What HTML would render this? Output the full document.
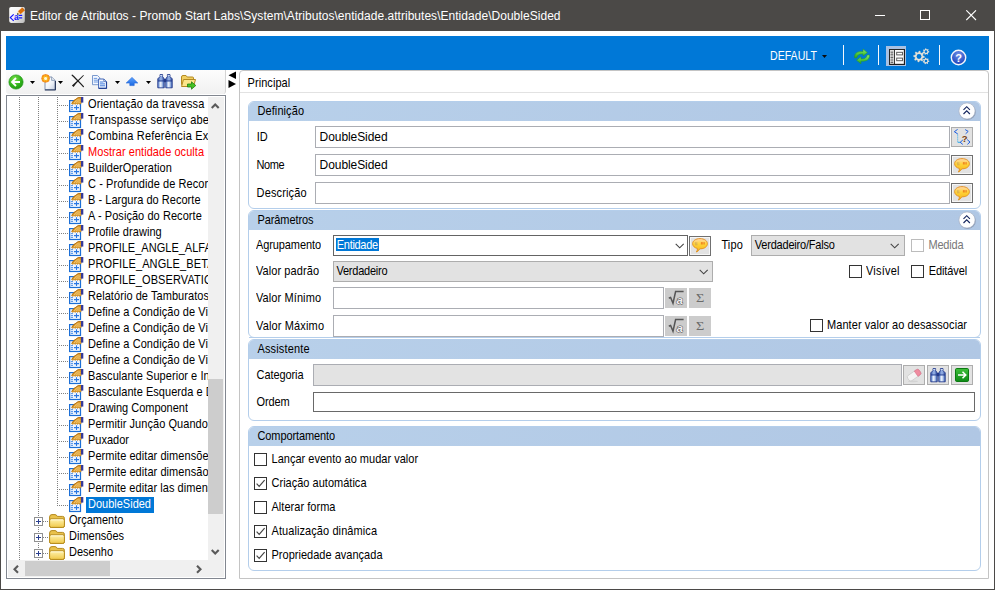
<!DOCTYPE html><html><head><meta charset="utf-8"><title>Editor de Atributos</title><style>
html,body{margin:0;padding:0;}
body{width:995px;height:590px;overflow:hidden;background:#fff;font-family:"Liberation Sans",sans-serif;font-size:11px;color:#000;position:relative;}
div,svg{box-sizing:border-box;}
.abs{position:absolute;}
.grp{position:absolute;border:1px solid #b4ceeb;border-radius:6px;background:#fff;overflow:hidden;}
.gh{position:absolute;left:-1px;top:-1px;right:-1px;height:20px;background:linear-gradient(90deg,#b8d0ea 0%,#b0c7e4 100%);}
.inp{position:absolute;background:#fff;border:1px solid #abadb3;}
.btn{position:absolute;background:#e2e2e2;border:1px solid #adadad;}
.cb{position:absolute;width:13px;height:13px;background:#fff;border:1px solid #333;}
.vdot{position:absolute;width:1px;background-image:linear-gradient(#808080 50%,rgba(0,0,0,0) 50%);background-size:1px 2px;}
.hdot{position:absolute;height:1px;background-image:linear-gradient(90deg,#808080 50%,rgba(0,0,0,0) 50%);background-size:2px 1px;}
</style></head><body>
<div style="position:absolute;left:0px;top:0px;width:995px;height:590px;background:#4b4947;"></div>
<div style="position:absolute;left:1px;top:31px;width:993px;height:558px;background:#fff;"></div>
<svg style="position:absolute;left:9px;top:7px" width="16" height="16" viewBox="0 0 16 16"><defs><linearGradient id="gti" x1="0" y1="0" x2="1" y2="1"><stop offset="0" stop-color="#ffffff"/><stop offset="0.45" stop-color="#f4f4f4"/><stop offset="1" stop-color="#b9b9b9"/></linearGradient></defs>
<rect x="0.2" y="0" width="15.6" height="15.9" rx="1.8" fill="url(#gti)"/>
<path d="M4.7 7.3 L1.3 10.6 L4.7 13.9" fill="none" stroke="#1414ff" stroke-width="1.15"/>
<text x="4.9" y="13.1" font-family="Liberation Sans, sans-serif" font-weight="bold" font-size="8.2" fill="#1414ff">a</text>
<path d="M9.6 8.4h3.6M9.6 10.8h3.6" stroke="#1414ff" stroke-width="1.15"/>
<path d="M8.90 4.22 L13.13 0.54 L15.75 3.56 L11.52 7.24 Z" fill="#e8780c"/>
<path d="M9.8 5.2 L14 1.55 M10.7 6.3 L14.9 2.6" stroke="#b65a06" stroke-width="0.5"/>
<path d="M13.13 0.54 L15.75 3.56" stroke="#a85206" stroke-width="0.7"/>
<path d="M8.2 7.5 L8.90 4.22 L11.52 7.24 Z" fill="#f7d58e"/>
<path d="M8.0 7.7 L8.5 5.9 L9.9 7.3 Z" fill="#111"/></svg>
<div style="position:absolute;left:30px;top:7.93px;font-size:12px;line-height:16px;color:#fff;white-space:nowrap;letter-spacing:0.030px;">Editor de Atributos - Promob Start Labs\System\Atributos\entidade.attributes\Entidade\DoubleSided</div>
<svg style="position:absolute;left:875px;top:10px" width="11" height="11" viewBox="0 0 11 11"><path d="M0 5.5h10" stroke="#fff" stroke-width="1"/></svg>
<svg style="position:absolute;left:920px;top:10px" width="11" height="11" viewBox="0 0 11 11"><rect x="0.5" y="0.5" width="9" height="9" fill="none" stroke="#fff" stroke-width="1"/></svg>
<svg style="position:absolute;left:966px;top:10px" width="11" height="11" viewBox="0 0 11 11"><path d="M0.3 0.3 L10 10 M10 0.3 L0.3 10" stroke="#fff" stroke-width="1.1"/></svg>
<div style="position:absolute;left:6px;top:36px;width:983px;height:34px;background:#0078d7;"></div>
<div style="position:absolute;left:769.7px;top:47.93px;font-size:12px;line-height:16px;color:#fff;white-space:nowrap;transform-origin:0 0;transform:scaleX(0.8829);">DEFAULT</div>
<svg style="position:absolute;left:822px;top:55px" width="5" height="3" viewBox="0 0 5 3"><path d="M0 0h5L2.5 3z" fill="#0b0b0b"/></svg>
<div style="position:absolute;left:843px;top:45px;width:1px;height:20px;background:#f2f7fc;"></div>
<svg style="position:absolute;left:854px;top:48.3px" width="16" height="17" viewBox="0 0 16 17"><defs><linearGradient id="grf" x1="0" y1="0" x2="0" y2="1"><stop offset="0" stop-color="#8be777"/><stop offset="0.55" stop-color="#4fc93c"/><stop offset="1" stop-color="#2a9d24"/></linearGradient></defs>
<path d="M0.4 9.8 C0.4 5.2 3 3.4 9 3.6 L9 1 L13.4 4.6 L9 8 L9 5.9 C5.4 5.7 3.4 6.7 2.9 9.8 Z" fill="url(#grf)" stroke="#2b9a24" stroke-width="0.55" stroke-linejoin="round"/>
<path d="M15.6 7.0 C15.6 11.6 13 13.4 7 13.2 L7 15.8 L2.6 12.2 L7 8.8 L7 10.9 C10.6 11.1 12.6 10.1 13.1 7.0 Z" fill="url(#grf)" stroke="#2b9a24" stroke-width="0.55" stroke-linejoin="round"/></svg>
<div style="position:absolute;left:878px;top:45px;width:1px;height:20px;background:#f2f7fc;"></div>
<svg style="position:absolute;left:886px;top:46px" width="20" height="20" viewBox="0 0 20 20"><rect x="0" y="0" width="20" height="20" fill="#a9c1e2"/>
<rect x="3.5" y="3.5" width="15" height="15" fill="#fbfbfb" stroke="#262626"/>
<rect x="4" y="4" width="4" height="14" fill="#dedede"/>
<path d="M8.5 4v14" stroke="#3a3a3a"/>
<path d="M4.6 6.2h2.6M4.6 8.8h2.6M4.6 11.4h2.6M4.6 14h2.6M4.6 16.4h2.6" stroke="#4a4a4a" stroke-width="0.9"/>
<path d="M5 7.5h2M5 10.1h2M5 12.7h2M5 15.3h2" stroke="#a9a9a9" stroke-width="0.8"/>
<rect x="10.7" y="6.3" width="5.8" height="2.6" fill="#fff" stroke="#4f4f4f" stroke-width="0.9"/>
<rect x="10.7" y="12.1" width="5.8" height="2.6" fill="#fff" stroke="#4f4f4f" stroke-width="0.9"/>
<path d="M4 18h14.5M18 4v14.5" stroke="#000" stroke-width="0.6" opacity="0.5"/></svg>
<svg style="position:absolute;left:912.5px;top:47.5px" width="17" height="17" viewBox="0 0 17 17"><path d="M11.60 8.50 L11.49 9.59 L9.73 10.04 L9.35 10.74 L9.96 12.46 L9.11 13.16 L7.54 12.23 L6.79 12.45 L6.00 14.10 L4.91 13.99 L4.46 12.23 L3.76 11.85 L2.04 12.46 L1.34 11.61 L2.27 10.04 L2.05 9.29 L0.40 8.50 L0.51 7.41 L2.27 6.96 L2.65 6.26 L2.04 4.54 L2.89 3.84 L4.46 4.77 L5.21 4.55 L6.00 2.90 L7.09 3.01 L7.54 4.77 L8.24 5.15 L9.96 4.54 L10.66 5.39 L9.73 6.96 L9.95 7.71Z" fill="#e6e3da" stroke="#cfcbbf" stroke-width="0.3"/><circle cx="6" cy="8.5" r="2.4" fill="#0078d7"/><path d="M16.30 3.60 L16.22 4.33 L15.14 4.63 L14.86 5.08 L15.06 6.18 L14.43 6.57 L13.53 5.92 L13.00 5.98 L12.27 6.82 L11.57 6.57 L11.52 5.46 L11.14 5.08 L10.03 5.03 L9.78 4.33 L10.62 3.60 L10.68 3.07 L10.03 2.17 L10.42 1.54 L11.52 1.74 L11.97 1.46 L12.27 0.38 L13.00 0.30 L13.53 1.28 L14.03 1.46 L15.06 1.02 L15.58 1.54 L15.14 2.57 L15.32 3.07Z" fill="#e6e3da"/><circle cx="13" cy="3.6" r="1.3" fill="#0078d7"/><path d="M16.30 13.00 L16.22 13.73 L15.14 14.03 L14.86 14.48 L15.06 15.58 L14.43 15.97 L13.53 15.32 L13.00 15.38 L12.27 16.22 L11.57 15.97 L11.52 14.86 L11.14 14.48 L10.03 14.43 L9.78 13.73 L10.62 13.00 L10.68 12.47 L10.03 11.57 L10.42 10.94 L11.52 11.14 L11.97 10.86 L12.27 9.78 L13.00 9.70 L13.53 10.68 L14.03 10.86 L15.06 10.42 L15.58 10.94 L15.14 11.97 L15.32 12.47Z" fill="#e6e3da"/><circle cx="13" cy="13" r="1.3" fill="#0078d7"/></svg>
<div style="position:absolute;left:939px;top:45px;width:1px;height:20px;background:#f2f7fc;"></div>
<svg style="position:absolute;left:949.5px;top:48.5px" width="17" height="17" viewBox="0 0 17 17"><defs><radialGradient id="ghp" cx="0.5" cy="0.3" r="0.8"><stop offset="0" stop-color="#6f8fe6"/><stop offset="0.7" stop-color="#2a4fc4"/><stop offset="1" stop-color="#1c3aa8"/></radialGradient></defs>
<circle cx="8.5" cy="8.5" r="7.2" fill="url(#ghp)" stroke="#f4f6fb" stroke-width="1.4"/>
<text x="8.5" y="12.6" font-family="Liberation Sans, sans-serif" font-size="11" font-weight="bold" fill="#fff" text-anchor="middle">?</text></svg>
<div style="position:absolute;left:6px;top:70px;width:220px;height:24px;background:linear-gradient(#fdfdfd,#f1f1f1);border-radius:0 0 3px 3px;border-right:1px solid #d4d4d4;"></div>
<svg style="position:absolute;left:7.5px;top:73.5px" width="16" height="16" viewBox="0 0 16 16"><defs><radialGradient id="gbk" cx="0.4" cy="0.3" r="0.8"><stop offset="0" stop-color="#7be04a"/><stop offset="0.6" stop-color="#2fb21a"/><stop offset="1" stop-color="#1d8f10"/></radialGradient></defs>
<circle cx="8" cy="8" r="7.1" fill="url(#gbk)" stroke="#1f9a14" stroke-width="0.7"/>
<path d="M8 4 L4 8 L8 12 M4.3 8 L12 8" fill="none" stroke="#fff" stroke-width="1.8" stroke-linejoin="miter"/></svg>
<svg style="position:absolute;left:30px;top:81px" width="5" height="3" viewBox="0 0 5 3"><path d="M0 0h5L2.5 3z" fill="#000"/></svg>
<svg style="position:absolute;left:40.5px;top:73.5px" width="16" height="17" viewBox="0 0 16 17"><defs><linearGradient id="gdoc" x1="0" y1="0" x2="1" y2="1"><stop offset="0" stop-color="#ffffff"/><stop offset="0.55" stop-color="#f1f4f9"/><stop offset="1" stop-color="#c3cde0"/></linearGradient>
<radialGradient id="gsun"><stop offset="0" stop-color="#fff9c4"/><stop offset="0.45" stop-color="#ffcf2a"/><stop offset="1" stop-color="#f4840e"/></radialGradient></defs>
<path d="M4 3 L10.6 3 L14.2 6.4 L14.2 15.6 L4 15.6 Z" fill="url(#gdoc)" stroke="#7486a6" stroke-width="0.9"/>
<path d="M10.6 3 L10.6 6.4 L14.2 6.4" fill="#e4e9f2" stroke="#7486a6" stroke-width="0.7"/>
<path d="M3.8 16h10.8M14.4 7v9" stroke="#26365a" stroke-width="1.1" fill="none"/>
<circle cx="4.6" cy="4.4" r="4.1" fill="url(#gsun)"/>
<path d="M4.6 0.3v8.2M0.5 4.4h8.2M1.7 1.5l5.8 5.8M7.5 1.5l-5.8 5.8" stroke="#ee5a10" stroke-width="0.6" stroke-dasharray="0.9 0.9" opacity="0.85"/>
<circle cx="4.6" cy="4.4" r="1.5" fill="#fffbd6"/></svg>
<svg style="position:absolute;left:58px;top:81px" width="5" height="3" viewBox="0 0 5 3"><path d="M0 0h5L2.5 3z" fill="#000"/></svg>
<svg style="position:absolute;left:70.6px;top:73.8px" width="14" height="14" viewBox="0 0 14 14"><path d="M1.2 1.2 C4.5 4 8.5 8.5 12.4 12.6" stroke="#1e1e1e" stroke-width="1.25" stroke-linecap="round" fill="none"/>
<path d="M12.3 0.9 L12.9 1.5 C9 5.5 5.5 9 2.6 12.9 L0.9 11.6 C4.5 8.2 8.4 4.6 12.3 0.9 Z" fill="#1e1e1e"/></svg>
<svg style="position:absolute;left:91.8px;top:74.6px" width="16" height="15" viewBox="0 0 16 15"><path d="M0.5 0.5 h5 l2.3 2.3 v6.9 h-7.3z" fill="#f2f7ff" stroke="#6d8fc8" stroke-width="0.9"/>
<path d="M1.8 3.4h3.4M1.8 5.2h4.6M1.8 7h4.6" stroke="#5f8fdc" stroke-width="0.9"/>
<path d="M6.6 4 h5.2 l2.6 2.6 v6.6 h-7.8z" fill="#f7faff" stroke="#2e56ae" stroke-width="0.9"/>
<path d="M8 7h3.4M8 8.9h5M8 10.8h5" stroke="#3c78dc" stroke-width="1"/>
<path d="M6.6 13.4h8M14.6 6.8v6.8" stroke="#1d3c92" stroke-width="1"/>
<path d="M11.8 4v2.6h2.6" fill="none" stroke="#2e56ae" stroke-width="0.7"/></svg>
<svg style="position:absolute;left:115px;top:81px" width="5" height="3" viewBox="0 0 5 3"><path d="M0 0h5L2.5 3z" fill="#000"/></svg>
<svg style="position:absolute;left:126px;top:77px" width="12" height="10" viewBox="0 0 12 10"><defs><linearGradient id="gup" x1="0" y1="0" x2="0" y2="1"><stop offset="0" stop-color="#5aa2ff"/><stop offset="1" stop-color="#1c68e0"/></linearGradient></defs>
<path d="M6 0.4 L11.8 6 L8.2 6 L8.2 8.6 L3.8 8.6 L3.8 6 L0.2 6 Z" fill="url(#gup)" stroke="#1e63d6" stroke-width="0.6"/></svg>
<svg style="position:absolute;left:146px;top:81px" width="5" height="3" viewBox="0 0 5 3"><path d="M0 0h5L2.5 3z" fill="#000"/></svg>
<svg style="position:absolute;left:156.5px;top:74px" width="16" height="15" viewBox="0 0 16 15"><defs><linearGradient id="gbn" x1="0" y1="0" x2="1" y2="0"><stop offset="0" stop-color="#7fa0dc"/><stop offset="0.45" stop-color="#f4f8ff"/><stop offset="1" stop-color="#5f83c8"/></linearGradient>
<linearGradient id="gbn2" x1="0" y1="0" x2="1" y2="0"><stop offset="0" stop-color="#3f5fb0"/><stop offset="0.5" stop-color="#9db8ea"/><stop offset="1" stop-color="#2c4a9c"/></linearGradient></defs>
<path d="M3 0.6 h2.6 v2 l1.6 2.2 v9 h-6.4 v-9 l2.2 -2.2z" fill="url(#gbn2)" stroke="#22398a" stroke-width="0.9" stroke-linejoin="round"/>
<path d="M10.4 0.6 h2.6 v2 l2.2 2.2 v9 h-6.4 v-9 l1.6 -2.2z" fill="url(#gbn2)" stroke="#22398a" stroke-width="0.9" stroke-linejoin="round"/>
<rect x="1.5" y="7.6" width="5" height="5.6" fill="url(#gbn)"/>
<rect x="9.5" y="7.6" width="5" height="5.6" fill="url(#gbn)"/>
<rect x="7" y="5" width="2" height="3.2" fill="#22398a"/>
<path d="M3.2 1.6h2.2M10.6 1.6h2.2" stroke="#dfe9fb" stroke-width="0.9"/>
<path d="M1 6.9h6M9 6.9h6" stroke="#22398a" stroke-width="0.8"/></svg>
<svg style="position:absolute;left:181px;top:74px" width="16" height="16" viewBox="0 0 16 16"><path d="M0.5 3 Q0.5 1.5 2 1.5 L5 1.5 L6.2 3 L11.5 3 Q12.5 3 12.5 4 L12.5 10.5 L0.5 10.5 Z" fill="#f1cf62" stroke="#b48a22"/>
<path d="M2.5 5.5 L14.5 5.5 L12.5 12.5 L0.5 12.5 Z" fill="#fbe58a" stroke="#b48a22"/>
<path d="M6.5 10 h4 v-2.2 l4.3 3.7 l-4.3 3.7 v-2.2 h-4z" fill="#45c123" stroke="#1f7d12" stroke-width="0.8"/></svg>
<svg style="position:absolute;left:227.5px;top:70.7px" width="9" height="18" viewBox="0 0 9 18"><path d="M8 0.5 L0.5 4.3 L8 8 Z M0.5 9 L8 13 L0.5 17 Z" fill="#000"/></svg>
<div class="abs" style="left:6px;top:95px;width:220px;height:484px;border:1px solid #828790;background:#fff;overflow:hidden;">
<div class="abs" style="left:0;top:0;width:201px;height:464px;overflow:hidden;">
<div class="vdot" style="left:12px;top:1px;height:464px;"></div>
<div class="vdot" style="left:31px;top:1px;height:464px;"></div>
<div class="vdot" style="left:50px;top:1px;height:409px;"></div>
<div class="hdot" style="left:52px;top:9px;width:10px;"></div>
<svg style="position:absolute;left:62px;top:1px" width="16" height="16" viewBox="0 0 16 16"><rect x="0.6" y="3.6" width="10.9" height="10.9" fill="#edf4fe" stroke="#1b6ed6" stroke-width="1.2"/>
<path d="M1.8 8.6h2.2M1.8 10.6h2.2M1.8 12.4h2.2" stroke="#3f86e4" stroke-width="0.9"/>
<path d="M5 10.6h5M7.5 8.2v4.7" stroke="#2a78e2" stroke-width="1.1"/>
<path d="M2.6 6.6 L4.6 3.8 L9.4 0.4 L12.2 0.2 L12.2 6.2 L11 7.4 L9.8 6.4 L8.6 7.4 L7.4 6.4 L6.2 7.4 L5 6.4 L3.8 7.4 Z" fill="#dc9a2a" stroke="#b9770f" stroke-width="0.5"/>
<path d="M5 5.4h0.9M6.8 5.4h0.9M8.6 5.4h0.9M10.4 5.4h0.9M5.9 4.4h0.9M7.7 4.4h0.9M9.5 4.4h0.9M6.8 3.4h0.9M8.6 3.4h0.9M10.4 3.4h0.9M7.7 2.4h0.9M9.5 2.4h0.9" stroke="#f6d48c" stroke-width="0.9"/>
<path d="M2.8 6.4 L4.6 3.8 L9.4 0.5 L12 0.4" stroke="#b8720e" stroke-width="0.9" fill="none"/>
<rect x="12" y="0" width="2.3" height="5.6" fill="#34399a"/></svg>
<div style="position:absolute;left:81px;top:0.86px;font-size:11px;line-height:15px;color:#000;white-space:nowrap;letter-spacing:0.12px;transform-origin:0 11.14px;transform:scaleY(1.120);">Orientação da travessa</div>
<div class="hdot" style="left:52px;top:25px;width:10px;"></div>
<svg style="position:absolute;left:62px;top:17px" width="16" height="16" viewBox="0 0 16 16"><rect x="0.6" y="3.6" width="10.9" height="10.9" fill="#edf4fe" stroke="#1b6ed6" stroke-width="1.2"/>
<path d="M1.8 8.6h2.2M1.8 10.6h2.2M1.8 12.4h2.2" stroke="#3f86e4" stroke-width="0.9"/>
<path d="M5 10.6h5M7.5 8.2v4.7" stroke="#2a78e2" stroke-width="1.1"/>
<path d="M2.6 6.6 L4.6 3.8 L9.4 0.4 L12.2 0.2 L12.2 6.2 L11 7.4 L9.8 6.4 L8.6 7.4 L7.4 6.4 L6.2 7.4 L5 6.4 L3.8 7.4 Z" fill="#dc9a2a" stroke="#b9770f" stroke-width="0.5"/>
<path d="M5 5.4h0.9M6.8 5.4h0.9M8.6 5.4h0.9M10.4 5.4h0.9M5.9 4.4h0.9M7.7 4.4h0.9M9.5 4.4h0.9M6.8 3.4h0.9M8.6 3.4h0.9M10.4 3.4h0.9M7.7 2.4h0.9M9.5 2.4h0.9" stroke="#f6d48c" stroke-width="0.9"/>
<path d="M2.8 6.4 L4.6 3.8 L9.4 0.5 L12 0.4" stroke="#b8720e" stroke-width="0.9" fill="none"/>
<rect x="12" y="0" width="2.3" height="5.6" fill="#34399a"/></svg>
<div style="position:absolute;left:81px;top:16.86px;font-size:11px;line-height:15px;color:#000;white-space:nowrap;letter-spacing:0.22px;transform-origin:0 11.14px;transform:scaleY(1.120);">Transpasse serviço aberto</div>
<div class="hdot" style="left:52px;top:41px;width:10px;"></div>
<svg style="position:absolute;left:62px;top:33px" width="16" height="16" viewBox="0 0 16 16"><rect x="0.6" y="3.6" width="10.9" height="10.9" fill="#edf4fe" stroke="#1b6ed6" stroke-width="1.2"/>
<path d="M1.8 8.6h2.2M1.8 10.6h2.2M1.8 12.4h2.2" stroke="#3f86e4" stroke-width="0.9"/>
<path d="M5 10.6h5M7.5 8.2v4.7" stroke="#2a78e2" stroke-width="1.1"/>
<path d="M2.6 6.6 L4.6 3.8 L9.4 0.4 L12.2 0.2 L12.2 6.2 L11 7.4 L9.8 6.4 L8.6 7.4 L7.4 6.4 L6.2 7.4 L5 6.4 L3.8 7.4 Z" fill="#dc9a2a" stroke="#b9770f" stroke-width="0.5"/>
<path d="M5 5.4h0.9M6.8 5.4h0.9M8.6 5.4h0.9M10.4 5.4h0.9M5.9 4.4h0.9M7.7 4.4h0.9M9.5 4.4h0.9M6.8 3.4h0.9M8.6 3.4h0.9M10.4 3.4h0.9M7.7 2.4h0.9M9.5 2.4h0.9" stroke="#f6d48c" stroke-width="0.9"/>
<path d="M2.8 6.4 L4.6 3.8 L9.4 0.5 L12 0.4" stroke="#b8720e" stroke-width="0.9" fill="none"/>
<rect x="12" y="0" width="2.3" height="5.6" fill="#34399a"/></svg>
<div style="position:absolute;left:81px;top:32.86px;font-size:11px;line-height:15px;color:#000;white-space:nowrap;letter-spacing:0.21px;transform-origin:0 11.14px;transform:scaleY(1.120);">Combina Referência Exceção</div>
<div class="hdot" style="left:52px;top:57px;width:10px;"></div>
<svg style="position:absolute;left:62px;top:49px" width="16" height="16" viewBox="0 0 16 16"><rect x="0.6" y="3.6" width="10.9" height="10.9" fill="#edf4fe" stroke="#1b6ed6" stroke-width="1.2"/>
<path d="M1.8 8.6h2.2M1.8 10.6h2.2M1.8 12.4h2.2" stroke="#3f86e4" stroke-width="0.9"/>
<path d="M5 10.6h5M7.5 8.2v4.7" stroke="#2a78e2" stroke-width="1.1"/>
<path d="M2.6 6.6 L4.6 3.8 L9.4 0.4 L12.2 0.2 L12.2 6.2 L11 7.4 L9.8 6.4 L8.6 7.4 L7.4 6.4 L6.2 7.4 L5 6.4 L3.8 7.4 Z" fill="#dc9a2a" stroke="#b9770f" stroke-width="0.5"/>
<path d="M5 5.4h0.9M6.8 5.4h0.9M8.6 5.4h0.9M10.4 5.4h0.9M5.9 4.4h0.9M7.7 4.4h0.9M9.5 4.4h0.9M6.8 3.4h0.9M8.6 3.4h0.9M10.4 3.4h0.9M7.7 2.4h0.9M9.5 2.4h0.9" stroke="#f6d48c" stroke-width="0.9"/>
<path d="M2.8 6.4 L4.6 3.8 L9.4 0.5 L12 0.4" stroke="#b8720e" stroke-width="0.9" fill="none"/>
<rect x="12" y="0" width="2.3" height="5.6" fill="#34399a"/></svg>
<div style="position:absolute;left:81px;top:48.86px;font-size:11px;line-height:15px;color:#ff0000;white-space:nowrap;letter-spacing:0.05px;transform-origin:0 11.14px;transform:scaleY(1.120);">Mostrar entidade oculta</div>
<div class="hdot" style="left:52px;top:73px;width:10px;"></div>
<svg style="position:absolute;left:62px;top:65px" width="16" height="16" viewBox="0 0 16 16"><rect x="0.6" y="3.6" width="10.9" height="10.9" fill="#edf4fe" stroke="#1b6ed6" stroke-width="1.2"/>
<path d="M1.8 8.6h2.2M1.8 10.6h2.2M1.8 12.4h2.2" stroke="#3f86e4" stroke-width="0.9"/>
<path d="M5 10.6h5M7.5 8.2v4.7" stroke="#2a78e2" stroke-width="1.1"/>
<path d="M2.6 6.6 L4.6 3.8 L9.4 0.4 L12.2 0.2 L12.2 6.2 L11 7.4 L9.8 6.4 L8.6 7.4 L7.4 6.4 L6.2 7.4 L5 6.4 L3.8 7.4 Z" fill="#dc9a2a" stroke="#b9770f" stroke-width="0.5"/>
<path d="M5 5.4h0.9M6.8 5.4h0.9M8.6 5.4h0.9M10.4 5.4h0.9M5.9 4.4h0.9M7.7 4.4h0.9M9.5 4.4h0.9M6.8 3.4h0.9M8.6 3.4h0.9M10.4 3.4h0.9M7.7 2.4h0.9M9.5 2.4h0.9" stroke="#f6d48c" stroke-width="0.9"/>
<path d="M2.8 6.4 L4.6 3.8 L9.4 0.5 L12 0.4" stroke="#b8720e" stroke-width="0.9" fill="none"/>
<rect x="12" y="0" width="2.3" height="5.6" fill="#34399a"/></svg>
<div style="position:absolute;left:81px;top:64.86px;font-size:11px;line-height:15px;color:#000;white-space:nowrap;letter-spacing:0.09px;transform-origin:0 11.14px;transform:scaleY(1.120);">BuilderOperation</div>
<div class="hdot" style="left:52px;top:89px;width:10px;"></div>
<svg style="position:absolute;left:62px;top:81px" width="16" height="16" viewBox="0 0 16 16"><rect x="0.6" y="3.6" width="10.9" height="10.9" fill="#edf4fe" stroke="#1b6ed6" stroke-width="1.2"/>
<path d="M1.8 8.6h2.2M1.8 10.6h2.2M1.8 12.4h2.2" stroke="#3f86e4" stroke-width="0.9"/>
<path d="M5 10.6h5M7.5 8.2v4.7" stroke="#2a78e2" stroke-width="1.1"/>
<path d="M2.6 6.6 L4.6 3.8 L9.4 0.4 L12.2 0.2 L12.2 6.2 L11 7.4 L9.8 6.4 L8.6 7.4 L7.4 6.4 L6.2 7.4 L5 6.4 L3.8 7.4 Z" fill="#dc9a2a" stroke="#b9770f" stroke-width="0.5"/>
<path d="M5 5.4h0.9M6.8 5.4h0.9M8.6 5.4h0.9M10.4 5.4h0.9M5.9 4.4h0.9M7.7 4.4h0.9M9.5 4.4h0.9M6.8 3.4h0.9M8.6 3.4h0.9M10.4 3.4h0.9M7.7 2.4h0.9M9.5 2.4h0.9" stroke="#f6d48c" stroke-width="0.9"/>
<path d="M2.8 6.4 L4.6 3.8 L9.4 0.5 L12 0.4" stroke="#b8720e" stroke-width="0.9" fill="none"/>
<rect x="12" y="0" width="2.3" height="5.6" fill="#34399a"/></svg>
<div style="position:absolute;left:81px;top:80.86px;font-size:11px;line-height:15px;color:#000;white-space:nowrap;letter-spacing:0.07px;transform-origin:0 11.14px;transform:scaleY(1.120);">C - Profundide de Recorte</div>
<div class="hdot" style="left:52px;top:105px;width:10px;"></div>
<svg style="position:absolute;left:62px;top:97px" width="16" height="16" viewBox="0 0 16 16"><rect x="0.6" y="3.6" width="10.9" height="10.9" fill="#edf4fe" stroke="#1b6ed6" stroke-width="1.2"/>
<path d="M1.8 8.6h2.2M1.8 10.6h2.2M1.8 12.4h2.2" stroke="#3f86e4" stroke-width="0.9"/>
<path d="M5 10.6h5M7.5 8.2v4.7" stroke="#2a78e2" stroke-width="1.1"/>
<path d="M2.6 6.6 L4.6 3.8 L9.4 0.4 L12.2 0.2 L12.2 6.2 L11 7.4 L9.8 6.4 L8.6 7.4 L7.4 6.4 L6.2 7.4 L5 6.4 L3.8 7.4 Z" fill="#dc9a2a" stroke="#b9770f" stroke-width="0.5"/>
<path d="M5 5.4h0.9M6.8 5.4h0.9M8.6 5.4h0.9M10.4 5.4h0.9M5.9 4.4h0.9M7.7 4.4h0.9M9.5 4.4h0.9M6.8 3.4h0.9M8.6 3.4h0.9M10.4 3.4h0.9M7.7 2.4h0.9M9.5 2.4h0.9" stroke="#f6d48c" stroke-width="0.9"/>
<path d="M2.8 6.4 L4.6 3.8 L9.4 0.5 L12 0.4" stroke="#b8720e" stroke-width="0.9" fill="none"/>
<rect x="12" y="0" width="2.3" height="5.6" fill="#34399a"/></svg>
<div style="position:absolute;left:81px;top:96.86px;font-size:11px;line-height:15px;color:#000;white-space:nowrap;letter-spacing:0.03px;transform-origin:0 11.14px;transform:scaleY(1.120);">B - Largura do Recorte</div>
<div class="hdot" style="left:52px;top:121px;width:10px;"></div>
<svg style="position:absolute;left:62px;top:113px" width="16" height="16" viewBox="0 0 16 16"><rect x="0.6" y="3.6" width="10.9" height="10.9" fill="#edf4fe" stroke="#1b6ed6" stroke-width="1.2"/>
<path d="M1.8 8.6h2.2M1.8 10.6h2.2M1.8 12.4h2.2" stroke="#3f86e4" stroke-width="0.9"/>
<path d="M5 10.6h5M7.5 8.2v4.7" stroke="#2a78e2" stroke-width="1.1"/>
<path d="M2.6 6.6 L4.6 3.8 L9.4 0.4 L12.2 0.2 L12.2 6.2 L11 7.4 L9.8 6.4 L8.6 7.4 L7.4 6.4 L6.2 7.4 L5 6.4 L3.8 7.4 Z" fill="#dc9a2a" stroke="#b9770f" stroke-width="0.5"/>
<path d="M5 5.4h0.9M6.8 5.4h0.9M8.6 5.4h0.9M10.4 5.4h0.9M5.9 4.4h0.9M7.7 4.4h0.9M9.5 4.4h0.9M6.8 3.4h0.9M8.6 3.4h0.9M10.4 3.4h0.9M7.7 2.4h0.9M9.5 2.4h0.9" stroke="#f6d48c" stroke-width="0.9"/>
<path d="M2.8 6.4 L4.6 3.8 L9.4 0.5 L12 0.4" stroke="#b8720e" stroke-width="0.9" fill="none"/>
<rect x="12" y="0" width="2.3" height="5.6" fill="#34399a"/></svg>
<div style="position:absolute;left:81px;top:112.86px;font-size:11px;line-height:15px;color:#000;white-space:nowrap;letter-spacing:0.06px;transform-origin:0 11.14px;transform:scaleY(1.120);">A - Posição do Recorte</div>
<div class="hdot" style="left:52px;top:137px;width:10px;"></div>
<svg style="position:absolute;left:62px;top:129px" width="16" height="16" viewBox="0 0 16 16"><rect x="0.6" y="3.6" width="10.9" height="10.9" fill="#edf4fe" stroke="#1b6ed6" stroke-width="1.2"/>
<path d="M1.8 8.6h2.2M1.8 10.6h2.2M1.8 12.4h2.2" stroke="#3f86e4" stroke-width="0.9"/>
<path d="M5 10.6h5M7.5 8.2v4.7" stroke="#2a78e2" stroke-width="1.1"/>
<path d="M2.6 6.6 L4.6 3.8 L9.4 0.4 L12.2 0.2 L12.2 6.2 L11 7.4 L9.8 6.4 L8.6 7.4 L7.4 6.4 L6.2 7.4 L5 6.4 L3.8 7.4 Z" fill="#dc9a2a" stroke="#b9770f" stroke-width="0.5"/>
<path d="M5 5.4h0.9M6.8 5.4h0.9M8.6 5.4h0.9M10.4 5.4h0.9M5.9 4.4h0.9M7.7 4.4h0.9M9.5 4.4h0.9M6.8 3.4h0.9M8.6 3.4h0.9M10.4 3.4h0.9M7.7 2.4h0.9M9.5 2.4h0.9" stroke="#f6d48c" stroke-width="0.9"/>
<path d="M2.8 6.4 L4.6 3.8 L9.4 0.5 L12 0.4" stroke="#b8720e" stroke-width="0.9" fill="none"/>
<rect x="12" y="0" width="2.3" height="5.6" fill="#34399a"/></svg>
<div style="position:absolute;left:81px;top:128.86px;font-size:11px;line-height:15px;color:#000;white-space:nowrap;letter-spacing:0.07px;transform-origin:0 11.14px;transform:scaleY(1.120);">Profile drawing</div>
<div class="hdot" style="left:52px;top:153px;width:10px;"></div>
<svg style="position:absolute;left:62px;top:145px" width="16" height="16" viewBox="0 0 16 16"><rect x="0.6" y="3.6" width="10.9" height="10.9" fill="#edf4fe" stroke="#1b6ed6" stroke-width="1.2"/>
<path d="M1.8 8.6h2.2M1.8 10.6h2.2M1.8 12.4h2.2" stroke="#3f86e4" stroke-width="0.9"/>
<path d="M5 10.6h5M7.5 8.2v4.7" stroke="#2a78e2" stroke-width="1.1"/>
<path d="M2.6 6.6 L4.6 3.8 L9.4 0.4 L12.2 0.2 L12.2 6.2 L11 7.4 L9.8 6.4 L8.6 7.4 L7.4 6.4 L6.2 7.4 L5 6.4 L3.8 7.4 Z" fill="#dc9a2a" stroke="#b9770f" stroke-width="0.5"/>
<path d="M5 5.4h0.9M6.8 5.4h0.9M8.6 5.4h0.9M10.4 5.4h0.9M5.9 4.4h0.9M7.7 4.4h0.9M9.5 4.4h0.9M6.8 3.4h0.9M8.6 3.4h0.9M10.4 3.4h0.9M7.7 2.4h0.9M9.5 2.4h0.9" stroke="#f6d48c" stroke-width="0.9"/>
<path d="M2.8 6.4 L4.6 3.8 L9.4 0.5 L12 0.4" stroke="#b8720e" stroke-width="0.9" fill="none"/>
<rect x="12" y="0" width="2.3" height="5.6" fill="#34399a"/></svg>
<div style="position:absolute;left:81px;top:144.86px;font-size:11px;line-height:15px;color:#000;white-space:nowrap;letter-spacing:0.02px;transform-origin:0 11.14px;transform:scaleY(1.120);">PROFILE_ANGLE_ALFA</div>
<div class="hdot" style="left:52px;top:169px;width:10px;"></div>
<svg style="position:absolute;left:62px;top:161px" width="16" height="16" viewBox="0 0 16 16"><rect x="0.6" y="3.6" width="10.9" height="10.9" fill="#edf4fe" stroke="#1b6ed6" stroke-width="1.2"/>
<path d="M1.8 8.6h2.2M1.8 10.6h2.2M1.8 12.4h2.2" stroke="#3f86e4" stroke-width="0.9"/>
<path d="M5 10.6h5M7.5 8.2v4.7" stroke="#2a78e2" stroke-width="1.1"/>
<path d="M2.6 6.6 L4.6 3.8 L9.4 0.4 L12.2 0.2 L12.2 6.2 L11 7.4 L9.8 6.4 L8.6 7.4 L7.4 6.4 L6.2 7.4 L5 6.4 L3.8 7.4 Z" fill="#dc9a2a" stroke="#b9770f" stroke-width="0.5"/>
<path d="M5 5.4h0.9M6.8 5.4h0.9M8.6 5.4h0.9M10.4 5.4h0.9M5.9 4.4h0.9M7.7 4.4h0.9M9.5 4.4h0.9M6.8 3.4h0.9M8.6 3.4h0.9M10.4 3.4h0.9M7.7 2.4h0.9M9.5 2.4h0.9" stroke="#f6d48c" stroke-width="0.9"/>
<path d="M2.8 6.4 L4.6 3.8 L9.4 0.5 L12 0.4" stroke="#b8720e" stroke-width="0.9" fill="none"/>
<rect x="12" y="0" width="2.3" height="5.6" fill="#34399a"/></svg>
<div style="position:absolute;left:81px;top:160.86px;font-size:11px;line-height:15px;color:#000;white-space:nowrap;letter-spacing:0.12px;transform-origin:0 11.14px;transform:scaleY(1.120);">PROFILE_ANGLE_BETA</div>
<div class="hdot" style="left:52px;top:185px;width:10px;"></div>
<svg style="position:absolute;left:62px;top:177px" width="16" height="16" viewBox="0 0 16 16"><rect x="0.6" y="3.6" width="10.9" height="10.9" fill="#edf4fe" stroke="#1b6ed6" stroke-width="1.2"/>
<path d="M1.8 8.6h2.2M1.8 10.6h2.2M1.8 12.4h2.2" stroke="#3f86e4" stroke-width="0.9"/>
<path d="M5 10.6h5M7.5 8.2v4.7" stroke="#2a78e2" stroke-width="1.1"/>
<path d="M2.6 6.6 L4.6 3.8 L9.4 0.4 L12.2 0.2 L12.2 6.2 L11 7.4 L9.8 6.4 L8.6 7.4 L7.4 6.4 L6.2 7.4 L5 6.4 L3.8 7.4 Z" fill="#dc9a2a" stroke="#b9770f" stroke-width="0.5"/>
<path d="M5 5.4h0.9M6.8 5.4h0.9M8.6 5.4h0.9M10.4 5.4h0.9M5.9 4.4h0.9M7.7 4.4h0.9M9.5 4.4h0.9M6.8 3.4h0.9M8.6 3.4h0.9M10.4 3.4h0.9M7.7 2.4h0.9M9.5 2.4h0.9" stroke="#f6d48c" stroke-width="0.9"/>
<path d="M2.8 6.4 L4.6 3.8 L9.4 0.5 L12 0.4" stroke="#b8720e" stroke-width="0.9" fill="none"/>
<rect x="12" y="0" width="2.3" height="5.6" fill="#34399a"/></svg>
<div style="position:absolute;left:81px;top:176.86px;font-size:11px;line-height:15px;color:#000;white-space:nowrap;letter-spacing:0.10px;transform-origin:0 11.14px;transform:scaleY(1.120);">PROFILE_OBSERVATION</div>
<div class="hdot" style="left:52px;top:201px;width:10px;"></div>
<svg style="position:absolute;left:62px;top:193px" width="16" height="16" viewBox="0 0 16 16"><rect x="0.6" y="3.6" width="10.9" height="10.9" fill="#edf4fe" stroke="#1b6ed6" stroke-width="1.2"/>
<path d="M1.8 8.6h2.2M1.8 10.6h2.2M1.8 12.4h2.2" stroke="#3f86e4" stroke-width="0.9"/>
<path d="M5 10.6h5M7.5 8.2v4.7" stroke="#2a78e2" stroke-width="1.1"/>
<path d="M2.6 6.6 L4.6 3.8 L9.4 0.4 L12.2 0.2 L12.2 6.2 L11 7.4 L9.8 6.4 L8.6 7.4 L7.4 6.4 L6.2 7.4 L5 6.4 L3.8 7.4 Z" fill="#dc9a2a" stroke="#b9770f" stroke-width="0.5"/>
<path d="M5 5.4h0.9M6.8 5.4h0.9M8.6 5.4h0.9M10.4 5.4h0.9M5.9 4.4h0.9M7.7 4.4h0.9M9.5 4.4h0.9M6.8 3.4h0.9M8.6 3.4h0.9M10.4 3.4h0.9M7.7 2.4h0.9M9.5 2.4h0.9" stroke="#f6d48c" stroke-width="0.9"/>
<path d="M2.8 6.4 L4.6 3.8 L9.4 0.5 L12 0.4" stroke="#b8720e" stroke-width="0.9" fill="none"/>
<rect x="12" y="0" width="2.3" height="5.6" fill="#34399a"/></svg>
<div style="position:absolute;left:81px;top:192.86px;font-size:11px;line-height:15px;color:#000;white-space:nowrap;letter-spacing:0.06px;transform-origin:0 11.14px;transform:scaleY(1.120);">Relatório de Tamburatos</div>
<div class="hdot" style="left:52px;top:217px;width:10px;"></div>
<svg style="position:absolute;left:62px;top:209px" width="16" height="16" viewBox="0 0 16 16"><rect x="0.6" y="3.6" width="10.9" height="10.9" fill="#edf4fe" stroke="#1b6ed6" stroke-width="1.2"/>
<path d="M1.8 8.6h2.2M1.8 10.6h2.2M1.8 12.4h2.2" stroke="#3f86e4" stroke-width="0.9"/>
<path d="M5 10.6h5M7.5 8.2v4.7" stroke="#2a78e2" stroke-width="1.1"/>
<path d="M2.6 6.6 L4.6 3.8 L9.4 0.4 L12.2 0.2 L12.2 6.2 L11 7.4 L9.8 6.4 L8.6 7.4 L7.4 6.4 L6.2 7.4 L5 6.4 L3.8 7.4 Z" fill="#dc9a2a" stroke="#b9770f" stroke-width="0.5"/>
<path d="M5 5.4h0.9M6.8 5.4h0.9M8.6 5.4h0.9M10.4 5.4h0.9M5.9 4.4h0.9M7.7 4.4h0.9M9.5 4.4h0.9M6.8 3.4h0.9M8.6 3.4h0.9M10.4 3.4h0.9M7.7 2.4h0.9M9.5 2.4h0.9" stroke="#f6d48c" stroke-width="0.9"/>
<path d="M2.8 6.4 L4.6 3.8 L9.4 0.5 L12 0.4" stroke="#b8720e" stroke-width="0.9" fill="none"/>
<rect x="12" y="0" width="2.3" height="5.6" fill="#34399a"/></svg>
<div style="position:absolute;left:81px;top:208.86px;font-size:11px;line-height:15px;color:#000;white-space:nowrap;letter-spacing:0.07px;transform-origin:0 11.14px;transform:scaleY(1.120);">Define a Condição de Visibilidade</div>
<div class="hdot" style="left:52px;top:233px;width:10px;"></div>
<svg style="position:absolute;left:62px;top:225px" width="16" height="16" viewBox="0 0 16 16"><rect x="0.6" y="3.6" width="10.9" height="10.9" fill="#edf4fe" stroke="#1b6ed6" stroke-width="1.2"/>
<path d="M1.8 8.6h2.2M1.8 10.6h2.2M1.8 12.4h2.2" stroke="#3f86e4" stroke-width="0.9"/>
<path d="M5 10.6h5M7.5 8.2v4.7" stroke="#2a78e2" stroke-width="1.1"/>
<path d="M2.6 6.6 L4.6 3.8 L9.4 0.4 L12.2 0.2 L12.2 6.2 L11 7.4 L9.8 6.4 L8.6 7.4 L7.4 6.4 L6.2 7.4 L5 6.4 L3.8 7.4 Z" fill="#dc9a2a" stroke="#b9770f" stroke-width="0.5"/>
<path d="M5 5.4h0.9M6.8 5.4h0.9M8.6 5.4h0.9M10.4 5.4h0.9M5.9 4.4h0.9M7.7 4.4h0.9M9.5 4.4h0.9M6.8 3.4h0.9M8.6 3.4h0.9M10.4 3.4h0.9M7.7 2.4h0.9M9.5 2.4h0.9" stroke="#f6d48c" stroke-width="0.9"/>
<path d="M2.8 6.4 L4.6 3.8 L9.4 0.5 L12 0.4" stroke="#b8720e" stroke-width="0.9" fill="none"/>
<rect x="12" y="0" width="2.3" height="5.6" fill="#34399a"/></svg>
<div style="position:absolute;left:81px;top:224.86px;font-size:11px;line-height:15px;color:#000;white-space:nowrap;letter-spacing:0.07px;transform-origin:0 11.14px;transform:scaleY(1.120);">Define a Condição de Visibilidade</div>
<div class="hdot" style="left:52px;top:249px;width:10px;"></div>
<svg style="position:absolute;left:62px;top:241px" width="16" height="16" viewBox="0 0 16 16"><rect x="0.6" y="3.6" width="10.9" height="10.9" fill="#edf4fe" stroke="#1b6ed6" stroke-width="1.2"/>
<path d="M1.8 8.6h2.2M1.8 10.6h2.2M1.8 12.4h2.2" stroke="#3f86e4" stroke-width="0.9"/>
<path d="M5 10.6h5M7.5 8.2v4.7" stroke="#2a78e2" stroke-width="1.1"/>
<path d="M2.6 6.6 L4.6 3.8 L9.4 0.4 L12.2 0.2 L12.2 6.2 L11 7.4 L9.8 6.4 L8.6 7.4 L7.4 6.4 L6.2 7.4 L5 6.4 L3.8 7.4 Z" fill="#dc9a2a" stroke="#b9770f" stroke-width="0.5"/>
<path d="M5 5.4h0.9M6.8 5.4h0.9M8.6 5.4h0.9M10.4 5.4h0.9M5.9 4.4h0.9M7.7 4.4h0.9M9.5 4.4h0.9M6.8 3.4h0.9M8.6 3.4h0.9M10.4 3.4h0.9M7.7 2.4h0.9M9.5 2.4h0.9" stroke="#f6d48c" stroke-width="0.9"/>
<path d="M2.8 6.4 L4.6 3.8 L9.4 0.5 L12 0.4" stroke="#b8720e" stroke-width="0.9" fill="none"/>
<rect x="12" y="0" width="2.3" height="5.6" fill="#34399a"/></svg>
<div style="position:absolute;left:81px;top:240.86px;font-size:11px;line-height:15px;color:#000;white-space:nowrap;letter-spacing:0.07px;transform-origin:0 11.14px;transform:scaleY(1.120);">Define a Condição de Visibilidade</div>
<div class="hdot" style="left:52px;top:265px;width:10px;"></div>
<svg style="position:absolute;left:62px;top:257px" width="16" height="16" viewBox="0 0 16 16"><rect x="0.6" y="3.6" width="10.9" height="10.9" fill="#edf4fe" stroke="#1b6ed6" stroke-width="1.2"/>
<path d="M1.8 8.6h2.2M1.8 10.6h2.2M1.8 12.4h2.2" stroke="#3f86e4" stroke-width="0.9"/>
<path d="M5 10.6h5M7.5 8.2v4.7" stroke="#2a78e2" stroke-width="1.1"/>
<path d="M2.6 6.6 L4.6 3.8 L9.4 0.4 L12.2 0.2 L12.2 6.2 L11 7.4 L9.8 6.4 L8.6 7.4 L7.4 6.4 L6.2 7.4 L5 6.4 L3.8 7.4 Z" fill="#dc9a2a" stroke="#b9770f" stroke-width="0.5"/>
<path d="M5 5.4h0.9M6.8 5.4h0.9M8.6 5.4h0.9M10.4 5.4h0.9M5.9 4.4h0.9M7.7 4.4h0.9M9.5 4.4h0.9M6.8 3.4h0.9M8.6 3.4h0.9M10.4 3.4h0.9M7.7 2.4h0.9M9.5 2.4h0.9" stroke="#f6d48c" stroke-width="0.9"/>
<path d="M2.8 6.4 L4.6 3.8 L9.4 0.5 L12 0.4" stroke="#b8720e" stroke-width="0.9" fill="none"/>
<rect x="12" y="0" width="2.3" height="5.6" fill="#34399a"/></svg>
<div style="position:absolute;left:81px;top:256.86px;font-size:11px;line-height:15px;color:#000;white-space:nowrap;letter-spacing:0.07px;transform-origin:0 11.14px;transform:scaleY(1.120);">Define a Condição de Visibilidade</div>
<div class="hdot" style="left:52px;top:281px;width:10px;"></div>
<svg style="position:absolute;left:62px;top:273px" width="16" height="16" viewBox="0 0 16 16"><rect x="0.6" y="3.6" width="10.9" height="10.9" fill="#edf4fe" stroke="#1b6ed6" stroke-width="1.2"/>
<path d="M1.8 8.6h2.2M1.8 10.6h2.2M1.8 12.4h2.2" stroke="#3f86e4" stroke-width="0.9"/>
<path d="M5 10.6h5M7.5 8.2v4.7" stroke="#2a78e2" stroke-width="1.1"/>
<path d="M2.6 6.6 L4.6 3.8 L9.4 0.4 L12.2 0.2 L12.2 6.2 L11 7.4 L9.8 6.4 L8.6 7.4 L7.4 6.4 L6.2 7.4 L5 6.4 L3.8 7.4 Z" fill="#dc9a2a" stroke="#b9770f" stroke-width="0.5"/>
<path d="M5 5.4h0.9M6.8 5.4h0.9M8.6 5.4h0.9M10.4 5.4h0.9M5.9 4.4h0.9M7.7 4.4h0.9M9.5 4.4h0.9M6.8 3.4h0.9M8.6 3.4h0.9M10.4 3.4h0.9M7.7 2.4h0.9M9.5 2.4h0.9" stroke="#f6d48c" stroke-width="0.9"/>
<path d="M2.8 6.4 L4.6 3.8 L9.4 0.5 L12 0.4" stroke="#b8720e" stroke-width="0.9" fill="none"/>
<rect x="12" y="0" width="2.3" height="5.6" fill="#34399a"/></svg>
<div style="position:absolute;left:81px;top:272.86px;font-size:11px;line-height:15px;color:#000;white-space:nowrap;letter-spacing:0.05px;transform-origin:0 11.14px;transform:scaleY(1.120);">Basculante Superior e Inferior</div>
<div class="hdot" style="left:52px;top:297px;width:10px;"></div>
<svg style="position:absolute;left:62px;top:289px" width="16" height="16" viewBox="0 0 16 16"><rect x="0.6" y="3.6" width="10.9" height="10.9" fill="#edf4fe" stroke="#1b6ed6" stroke-width="1.2"/>
<path d="M1.8 8.6h2.2M1.8 10.6h2.2M1.8 12.4h2.2" stroke="#3f86e4" stroke-width="0.9"/>
<path d="M5 10.6h5M7.5 8.2v4.7" stroke="#2a78e2" stroke-width="1.1"/>
<path d="M2.6 6.6 L4.6 3.8 L9.4 0.4 L12.2 0.2 L12.2 6.2 L11 7.4 L9.8 6.4 L8.6 7.4 L7.4 6.4 L6.2 7.4 L5 6.4 L3.8 7.4 Z" fill="#dc9a2a" stroke="#b9770f" stroke-width="0.5"/>
<path d="M5 5.4h0.9M6.8 5.4h0.9M8.6 5.4h0.9M10.4 5.4h0.9M5.9 4.4h0.9M7.7 4.4h0.9M9.5 4.4h0.9M6.8 3.4h0.9M8.6 3.4h0.9M10.4 3.4h0.9M7.7 2.4h0.9M9.5 2.4h0.9" stroke="#f6d48c" stroke-width="0.9"/>
<path d="M2.8 6.4 L4.6 3.8 L9.4 0.5 L12 0.4" stroke="#b8720e" stroke-width="0.9" fill="none"/>
<rect x="12" y="0" width="2.3" height="5.6" fill="#34399a"/></svg>
<div style="position:absolute;left:81px;top:288.86px;font-size:11px;line-height:15px;color:#000;white-space:nowrap;letter-spacing:0.04px;transform-origin:0 11.14px;transform:scaleY(1.120);">Basculante Esquerda e Direita</div>
<div class="hdot" style="left:52px;top:313px;width:10px;"></div>
<svg style="position:absolute;left:62px;top:305px" width="16" height="16" viewBox="0 0 16 16"><rect x="0.6" y="3.6" width="10.9" height="10.9" fill="#edf4fe" stroke="#1b6ed6" stroke-width="1.2"/>
<path d="M1.8 8.6h2.2M1.8 10.6h2.2M1.8 12.4h2.2" stroke="#3f86e4" stroke-width="0.9"/>
<path d="M5 10.6h5M7.5 8.2v4.7" stroke="#2a78e2" stroke-width="1.1"/>
<path d="M2.6 6.6 L4.6 3.8 L9.4 0.4 L12.2 0.2 L12.2 6.2 L11 7.4 L9.8 6.4 L8.6 7.4 L7.4 6.4 L6.2 7.4 L5 6.4 L3.8 7.4 Z" fill="#dc9a2a" stroke="#b9770f" stroke-width="0.5"/>
<path d="M5 5.4h0.9M6.8 5.4h0.9M8.6 5.4h0.9M10.4 5.4h0.9M5.9 4.4h0.9M7.7 4.4h0.9M9.5 4.4h0.9M6.8 3.4h0.9M8.6 3.4h0.9M10.4 3.4h0.9M7.7 2.4h0.9M9.5 2.4h0.9" stroke="#f6d48c" stroke-width="0.9"/>
<path d="M2.8 6.4 L4.6 3.8 L9.4 0.5 L12 0.4" stroke="#b8720e" stroke-width="0.9" fill="none"/>
<rect x="12" y="0" width="2.3" height="5.6" fill="#34399a"/></svg>
<div style="position:absolute;left:81px;top:304.86px;font-size:11px;line-height:15px;color:#000;white-space:nowrap;letter-spacing:-0.02px;transform-origin:0 11.14px;transform:scaleY(1.120);">Drawing Component</div>
<div class="hdot" style="left:52px;top:329px;width:10px;"></div>
<svg style="position:absolute;left:62px;top:321px" width="16" height="16" viewBox="0 0 16 16"><rect x="0.6" y="3.6" width="10.9" height="10.9" fill="#edf4fe" stroke="#1b6ed6" stroke-width="1.2"/>
<path d="M1.8 8.6h2.2M1.8 10.6h2.2M1.8 12.4h2.2" stroke="#3f86e4" stroke-width="0.9"/>
<path d="M5 10.6h5M7.5 8.2v4.7" stroke="#2a78e2" stroke-width="1.1"/>
<path d="M2.6 6.6 L4.6 3.8 L9.4 0.4 L12.2 0.2 L12.2 6.2 L11 7.4 L9.8 6.4 L8.6 7.4 L7.4 6.4 L6.2 7.4 L5 6.4 L3.8 7.4 Z" fill="#dc9a2a" stroke="#b9770f" stroke-width="0.5"/>
<path d="M5 5.4h0.9M6.8 5.4h0.9M8.6 5.4h0.9M10.4 5.4h0.9M5.9 4.4h0.9M7.7 4.4h0.9M9.5 4.4h0.9M6.8 3.4h0.9M8.6 3.4h0.9M10.4 3.4h0.9M7.7 2.4h0.9M9.5 2.4h0.9" stroke="#f6d48c" stroke-width="0.9"/>
<path d="M2.8 6.4 L4.6 3.8 L9.4 0.5 L12 0.4" stroke="#b8720e" stroke-width="0.9" fill="none"/>
<rect x="12" y="0" width="2.3" height="5.6" fill="#34399a"/></svg>
<div style="position:absolute;left:81px;top:320.86px;font-size:11px;line-height:15px;color:#000;white-space:nowrap;letter-spacing:0.06px;transform-origin:0 11.14px;transform:scaleY(1.120);">Permitir Junção Quando</div>
<div class="hdot" style="left:52px;top:345px;width:10px;"></div>
<svg style="position:absolute;left:62px;top:337px" width="16" height="16" viewBox="0 0 16 16"><rect x="0.6" y="3.6" width="10.9" height="10.9" fill="#edf4fe" stroke="#1b6ed6" stroke-width="1.2"/>
<path d="M1.8 8.6h2.2M1.8 10.6h2.2M1.8 12.4h2.2" stroke="#3f86e4" stroke-width="0.9"/>
<path d="M5 10.6h5M7.5 8.2v4.7" stroke="#2a78e2" stroke-width="1.1"/>
<path d="M2.6 6.6 L4.6 3.8 L9.4 0.4 L12.2 0.2 L12.2 6.2 L11 7.4 L9.8 6.4 L8.6 7.4 L7.4 6.4 L6.2 7.4 L5 6.4 L3.8 7.4 Z" fill="#dc9a2a" stroke="#b9770f" stroke-width="0.5"/>
<path d="M5 5.4h0.9M6.8 5.4h0.9M8.6 5.4h0.9M10.4 5.4h0.9M5.9 4.4h0.9M7.7 4.4h0.9M9.5 4.4h0.9M6.8 3.4h0.9M8.6 3.4h0.9M10.4 3.4h0.9M7.7 2.4h0.9M9.5 2.4h0.9" stroke="#f6d48c" stroke-width="0.9"/>
<path d="M2.8 6.4 L4.6 3.8 L9.4 0.5 L12 0.4" stroke="#b8720e" stroke-width="0.9" fill="none"/>
<rect x="12" y="0" width="2.3" height="5.6" fill="#34399a"/></svg>
<div style="position:absolute;left:81px;top:336.86px;font-size:11px;line-height:15px;color:#000;white-space:nowrap;letter-spacing:0.00px;transform-origin:0 11.14px;transform:scaleY(1.120);">Puxador</div>
<div class="hdot" style="left:52px;top:361px;width:10px;"></div>
<svg style="position:absolute;left:62px;top:353px" width="16" height="16" viewBox="0 0 16 16"><rect x="0.6" y="3.6" width="10.9" height="10.9" fill="#edf4fe" stroke="#1b6ed6" stroke-width="1.2"/>
<path d="M1.8 8.6h2.2M1.8 10.6h2.2M1.8 12.4h2.2" stroke="#3f86e4" stroke-width="0.9"/>
<path d="M5 10.6h5M7.5 8.2v4.7" stroke="#2a78e2" stroke-width="1.1"/>
<path d="M2.6 6.6 L4.6 3.8 L9.4 0.4 L12.2 0.2 L12.2 6.2 L11 7.4 L9.8 6.4 L8.6 7.4 L7.4 6.4 L6.2 7.4 L5 6.4 L3.8 7.4 Z" fill="#dc9a2a" stroke="#b9770f" stroke-width="0.5"/>
<path d="M5 5.4h0.9M6.8 5.4h0.9M8.6 5.4h0.9M10.4 5.4h0.9M5.9 4.4h0.9M7.7 4.4h0.9M9.5 4.4h0.9M6.8 3.4h0.9M8.6 3.4h0.9M10.4 3.4h0.9M7.7 2.4h0.9M9.5 2.4h0.9" stroke="#f6d48c" stroke-width="0.9"/>
<path d="M2.8 6.4 L4.6 3.8 L9.4 0.5 L12 0.4" stroke="#b8720e" stroke-width="0.9" fill="none"/>
<rect x="12" y="0" width="2.3" height="5.6" fill="#34399a"/></svg>
<div style="position:absolute;left:81px;top:352.86px;font-size:11px;line-height:15px;color:#000;white-space:nowrap;letter-spacing:0.06px;transform-origin:0 11.14px;transform:scaleY(1.120);">Permite editar dimensões</div>
<div class="hdot" style="left:52px;top:377px;width:10px;"></div>
<svg style="position:absolute;left:62px;top:369px" width="16" height="16" viewBox="0 0 16 16"><rect x="0.6" y="3.6" width="10.9" height="10.9" fill="#edf4fe" stroke="#1b6ed6" stroke-width="1.2"/>
<path d="M1.8 8.6h2.2M1.8 10.6h2.2M1.8 12.4h2.2" stroke="#3f86e4" stroke-width="0.9"/>
<path d="M5 10.6h5M7.5 8.2v4.7" stroke="#2a78e2" stroke-width="1.1"/>
<path d="M2.6 6.6 L4.6 3.8 L9.4 0.4 L12.2 0.2 L12.2 6.2 L11 7.4 L9.8 6.4 L8.6 7.4 L7.4 6.4 L6.2 7.4 L5 6.4 L3.8 7.4 Z" fill="#dc9a2a" stroke="#b9770f" stroke-width="0.5"/>
<path d="M5 5.4h0.9M6.8 5.4h0.9M8.6 5.4h0.9M10.4 5.4h0.9M5.9 4.4h0.9M7.7 4.4h0.9M9.5 4.4h0.9M6.8 3.4h0.9M8.6 3.4h0.9M10.4 3.4h0.9M7.7 2.4h0.9M9.5 2.4h0.9" stroke="#f6d48c" stroke-width="0.9"/>
<path d="M2.8 6.4 L4.6 3.8 L9.4 0.5 L12 0.4" stroke="#b8720e" stroke-width="0.9" fill="none"/>
<rect x="12" y="0" width="2.3" height="5.6" fill="#34399a"/></svg>
<div style="position:absolute;left:81px;top:368.86px;font-size:11px;line-height:15px;color:#000;white-space:nowrap;letter-spacing:0.06px;transform-origin:0 11.14px;transform:scaleY(1.120);">Permite editar dimensão</div>
<div class="hdot" style="left:52px;top:393px;width:10px;"></div>
<svg style="position:absolute;left:62px;top:385px" width="16" height="16" viewBox="0 0 16 16"><rect x="0.6" y="3.6" width="10.9" height="10.9" fill="#edf4fe" stroke="#1b6ed6" stroke-width="1.2"/>
<path d="M1.8 8.6h2.2M1.8 10.6h2.2M1.8 12.4h2.2" stroke="#3f86e4" stroke-width="0.9"/>
<path d="M5 10.6h5M7.5 8.2v4.7" stroke="#2a78e2" stroke-width="1.1"/>
<path d="M2.6 6.6 L4.6 3.8 L9.4 0.4 L12.2 0.2 L12.2 6.2 L11 7.4 L9.8 6.4 L8.6 7.4 L7.4 6.4 L6.2 7.4 L5 6.4 L3.8 7.4 Z" fill="#dc9a2a" stroke="#b9770f" stroke-width="0.5"/>
<path d="M5 5.4h0.9M6.8 5.4h0.9M8.6 5.4h0.9M10.4 5.4h0.9M5.9 4.4h0.9M7.7 4.4h0.9M9.5 4.4h0.9M6.8 3.4h0.9M8.6 3.4h0.9M10.4 3.4h0.9M7.7 2.4h0.9M9.5 2.4h0.9" stroke="#f6d48c" stroke-width="0.9"/>
<path d="M2.8 6.4 L4.6 3.8 L9.4 0.5 L12 0.4" stroke="#b8720e" stroke-width="0.9" fill="none"/>
<rect x="12" y="0" width="2.3" height="5.6" fill="#34399a"/></svg>
<div style="position:absolute;left:81px;top:384.86px;font-size:11px;line-height:15px;color:#000;white-space:nowrap;letter-spacing:0.05px;transform-origin:0 11.14px;transform:scaleY(1.120);">Permite editar las dimensiones</div>
<div class="hdot" style="left:52px;top:409px;width:10px;"></div>
<svg style="position:absolute;left:62px;top:401px" width="16" height="16" viewBox="0 0 16 16"><rect x="0.6" y="3.6" width="10.9" height="10.9" fill="#edf4fe" stroke="#1b6ed6" stroke-width="1.2"/>
<path d="M1.8 8.6h2.2M1.8 10.6h2.2M1.8 12.4h2.2" stroke="#3f86e4" stroke-width="0.9"/>
<path d="M5 10.6h5M7.5 8.2v4.7" stroke="#2a78e2" stroke-width="1.1"/>
<path d="M2.6 6.6 L4.6 3.8 L9.4 0.4 L12.2 0.2 L12.2 6.2 L11 7.4 L9.8 6.4 L8.6 7.4 L7.4 6.4 L6.2 7.4 L5 6.4 L3.8 7.4 Z" fill="#dc9a2a" stroke="#b9770f" stroke-width="0.5"/>
<path d="M5 5.4h0.9M6.8 5.4h0.9M8.6 5.4h0.9M10.4 5.4h0.9M5.9 4.4h0.9M7.7 4.4h0.9M9.5 4.4h0.9M6.8 3.4h0.9M8.6 3.4h0.9M10.4 3.4h0.9M7.7 2.4h0.9M9.5 2.4h0.9" stroke="#f6d48c" stroke-width="0.9"/>
<path d="M2.8 6.4 L4.6 3.8 L9.4 0.5 L12 0.4" stroke="#b8720e" stroke-width="0.9" fill="none"/>
<rect x="12" y="0" width="2.3" height="5.6" fill="#34399a"/></svg>
<div style="position:absolute;left:79px;top:401px;width:68px;height:16px;background:#0078d7;"></div>
<div style="position:absolute;left:81px;top:400.86px;font-size:11px;line-height:15px;color:#fff;white-space:nowrap;letter-spacing:0.00px;transform-origin:0 11.14px;transform:scaleY(1.120);">DoubleSided</div>
<div class="hdot" style="left:36px;top:425px;width:6px;"></div>
<svg style="position:absolute;left:27px;top:421px" width="9" height="9" viewBox="0 0 9 9"><rect x="0.5" y="0.5" width="8" height="8" fill="#fff" stroke="#919191"/>
<path d="M2 4.5h5M4.5 2v5" stroke="#2a3f8f" stroke-width="1"/></svg>
<svg style="position:absolute;left:42px;top:417px" width="16" height="16" viewBox="0 0 16 16"><defs><linearGradient id="gfd" x1="0" y1="0" x2="0" y2="1"><stop offset="0" stop-color="#fff3b0"/><stop offset="1" stop-color="#f0c94a"/></linearGradient></defs>
<path d="M0.6 4 Q0.6 1.6 3 1.6 L6 1.6 Q7.6 1.6 8.2 3.4 L13.6 3.4 Q15.4 3.4 15.4 5.2 L15.4 12.8 Q15.4 14.4 13.8 14.4 L2.2 14.4 Q0.6 14.4 0.6 12.8 Z" fill="#e9c24c" stroke="#b58a1e" stroke-width="1"/>
<path d="M0.6 7.2 Q0.6 5.8 2 5.8 L14 5.8 Q15.4 5.8 15.4 7.2 L15.4 12.8 Q15.4 14.4 13.8 14.4 L2.2 14.4 Q0.6 14.4 0.6 12.8 Z" fill="url(#gfd)" stroke="#b58a1e" stroke-width="1"/>
<path d="M2 6.9h12" stroke="#fffbe0" stroke-width="0.9"/></svg>
<div style="position:absolute;left:62px;top:416.86px;font-size:11px;line-height:15px;color:#000;white-space:nowrap;transform-origin:0 11.14px;transform:scaleY(1.120);">Orçamento</div>
<div class="hdot" style="left:36px;top:441px;width:6px;"></div>
<svg style="position:absolute;left:27px;top:437px" width="9" height="9" viewBox="0 0 9 9"><rect x="0.5" y="0.5" width="8" height="8" fill="#fff" stroke="#919191"/>
<path d="M2 4.5h5M4.5 2v5" stroke="#2a3f8f" stroke-width="1"/></svg>
<svg style="position:absolute;left:42px;top:433px" width="16" height="16" viewBox="0 0 16 16"><defs><linearGradient id="gfd" x1="0" y1="0" x2="0" y2="1"><stop offset="0" stop-color="#fff3b0"/><stop offset="1" stop-color="#f0c94a"/></linearGradient></defs>
<path d="M0.6 4 Q0.6 1.6 3 1.6 L6 1.6 Q7.6 1.6 8.2 3.4 L13.6 3.4 Q15.4 3.4 15.4 5.2 L15.4 12.8 Q15.4 14.4 13.8 14.4 L2.2 14.4 Q0.6 14.4 0.6 12.8 Z" fill="#e9c24c" stroke="#b58a1e" stroke-width="1"/>
<path d="M0.6 7.2 Q0.6 5.8 2 5.8 L14 5.8 Q15.4 5.8 15.4 7.2 L15.4 12.8 Q15.4 14.4 13.8 14.4 L2.2 14.4 Q0.6 14.4 0.6 12.8 Z" fill="url(#gfd)" stroke="#b58a1e" stroke-width="1"/>
<path d="M2 6.9h12" stroke="#fffbe0" stroke-width="0.9"/></svg>
<div style="position:absolute;left:62px;top:432.86px;font-size:11px;line-height:15px;color:#000;white-space:nowrap;transform-origin:0 11.14px;transform:scaleY(1.120);">Dimensões</div>
<div class="hdot" style="left:36px;top:457px;width:6px;"></div>
<svg style="position:absolute;left:27px;top:453px" width="9" height="9" viewBox="0 0 9 9"><rect x="0.5" y="0.5" width="8" height="8" fill="#fff" stroke="#919191"/>
<path d="M2 4.5h5M4.5 2v5" stroke="#2a3f8f" stroke-width="1"/></svg>
<svg style="position:absolute;left:42px;top:449px" width="16" height="16" viewBox="0 0 16 16"><defs><linearGradient id="gfd" x1="0" y1="0" x2="0" y2="1"><stop offset="0" stop-color="#fff3b0"/><stop offset="1" stop-color="#f0c94a"/></linearGradient></defs>
<path d="M0.6 4 Q0.6 1.6 3 1.6 L6 1.6 Q7.6 1.6 8.2 3.4 L13.6 3.4 Q15.4 3.4 15.4 5.2 L15.4 12.8 Q15.4 14.4 13.8 14.4 L2.2 14.4 Q0.6 14.4 0.6 12.8 Z" fill="#e9c24c" stroke="#b58a1e" stroke-width="1"/>
<path d="M0.6 7.2 Q0.6 5.8 2 5.8 L14 5.8 Q15.4 5.8 15.4 7.2 L15.4 12.8 Q15.4 14.4 13.8 14.4 L2.2 14.4 Q0.6 14.4 0.6 12.8 Z" fill="url(#gfd)" stroke="#b58a1e" stroke-width="1"/>
<path d="M2 6.9h12" stroke="#fffbe0" stroke-width="0.9"/></svg>
<div style="position:absolute;left:62px;top:448.86px;font-size:11px;line-height:15px;color:#000;white-space:nowrap;transform-origin:0 11.14px;transform:scaleY(1.120);">Desenho</div>
</div>
<div style="position:absolute;left:201px;top:1px;width:16px;height:463px;background:#f0f0f0;"></div>
<svg style="position:absolute;left:204.2px;top:6.6px" width="9" height="6" viewBox="0 0 9 6"><path d="M0.7 5 L4.2 1.5 L7.7 5" fill="none" stroke="#5a5a5a" stroke-width="2.1"/></svg>
<div style="position:absolute;left:201px;top:283px;width:15px;height:135px;background:#cdcdcd;"></div>
<svg style="position:absolute;left:204.2px;top:453.2px" width="9" height="6" viewBox="0 0 9 6"><path d="M0.7 1 L4.2 4.5 L7.7 1" fill="none" stroke="#5a5a5a" stroke-width="2.1"/></svg>
<div style="position:absolute;left:1px;top:464px;width:216px;height:17px;background:#f0f0f0;"></div>
<svg style="position:absolute;left:6px;top:468.6px" width="6" height="9" viewBox="0 0 6 9"><path d="M5 0.7 L1.5 4.2 L5 7.7" fill="none" stroke="#5a5a5a" stroke-width="2.1"/></svg>
<div style="position:absolute;left:18px;top:465px;width:85px;height:15px;background:#cdcdcd;"></div>
<svg style="position:absolute;left:189.4px;top:468.6px" width="6" height="9" viewBox="0 0 6 9"><path d="M1 0.7 L4.5 4.2 L1 7.7" fill="none" stroke="#5a5a5a" stroke-width="2.1"/></svg>
</div>
<div style="position:absolute;left:239px;top:70px;width:750px;height:509px;border:1px solid #c4c4c4;border-radius:4px 4px 0 0;background:#fff;"></div>
<div style="position:absolute;left:240px;top:92px;width:748px;height:1px;background:#e2e2e2;"></div>
<div style="position:absolute;left:247.5px;top:75.86px;font-size:11px;line-height:15px;color:#000;white-space:nowrap;letter-spacing:0.065px;transform-origin:0 11.14px;transform:scaleY(1.120);">Principal</div>
<div class="grp" style="left:248px;top:101px;width:733px;height:108px;"><div class="gh"></div></div>
<div style="position:absolute;left:257.5px;top:103.86px;font-size:11px;line-height:15px;color:#000;white-space:nowrap;letter-spacing:0.081px;transform-origin:0 11.14px;transform:scaleY(1.120);">Definição</div>
<svg style="position:absolute;left:958px;top:102px" width="19" height="19" viewBox="0 0 19 19"><defs><radialGradient id="gcl" cx="0.45" cy="0.4" r="0.7"><stop offset="0" stop-color="#ffffff"/><stop offset="0.85" stop-color="#fdfdfe"/><stop offset="1" stop-color="#e4e7ee"/></radialGradient></defs>
<circle cx="9.5" cy="9.7" r="8.3" fill="#7d8aa3" opacity="0.7"/>
<circle cx="9" cy="9" r="8.1" fill="url(#gcl)" stroke="#a9b3c6" stroke-width="0.7"/>
<path d="M5.5 7.8 L8.7 4.7 L11.9 7.8 M5.5 12 L8.7 8.9 L11.9 12" fill="none" stroke="#14255e" stroke-width="1.15"/></svg>
<div style="position:absolute;left:256.8px;top:129.86px;font-size:11px;line-height:15px;color:#000;white-space:nowrap;transform-origin:0 11.14px;transform:scaleY(1.120);">ID</div>
<div style="position:absolute;left:256.6px;top:157.86px;font-size:11px;line-height:15px;color:#000;white-space:nowrap;letter-spacing:-0.447px;transform-origin:0 11.14px;transform:scaleY(1.120);">Nome</div>
<div style="position:absolute;left:256.6px;top:185.86px;font-size:11px;line-height:15px;color:#000;white-space:nowrap;letter-spacing:0.137px;transform-origin:0 11.14px;transform:scaleY(1.120);">Descrição</div>
<div class="inp" style="left:315px;top:126px;width:635px;height:22px;"></div>
<div class="inp" style="left:315px;top:154px;width:635px;height:22px;"></div>
<div class="inp" style="left:315px;top:182px;width:635px;height:22px;"></div>
<div style="position:absolute;left:319.6px;top:129.03px;font-size:12px;line-height:16px;color:#000;white-space:nowrap;letter-spacing:-0.072px;">DoubleSided</div>
<div style="position:absolute;left:319.6px;top:157.03px;font-size:12px;line-height:16px;color:#000;white-space:nowrap;letter-spacing:-0.072px;">DoubleSided</div>
<div class="btn" style="left:951px;top:127px;width:22px;height:20px;"></div>
<svg style="position:absolute;left:953px;top:128px" width="18" height="17" viewBox="0 0 18 17"><path d="M4.6 1.4 L1.3 3.7 L4.8 6" stroke="#1f5fe0" stroke-width="1" fill="none"/>
<path d="M12.2 1.6 L15.2 3.4 L12.6 5.8" stroke="#1f5fe0" stroke-width="1" fill="none"/>
<path d="M4.7 6.6v7.4" stroke="#2aa7ea" stroke-width="1" stroke-dasharray="1 1"/>
<path d="M4.7 14.3h3" stroke="#2aa7ea" stroke-width="1" fill="none"/>
<path d="M9.8 12 L7.2 14.3 L9.8 16.4" stroke="#1f5fe0" stroke-width="1" fill="none"/>
<path d="M14.2 11.6 L17 14 L14.4 16.4" stroke="#1f5fe0" stroke-width="1" fill="none"/>
<text x="11.7" y="13.6" font-family="Liberation Sans, sans-serif" font-size="9.5" font-weight="bold" fill="#7a3d0c" text-anchor="middle">?</text></svg>
<div class="btn" style="left:951px;top:155px;width:22px;height:20px;border-color:#707070;box-shadow:inset 0 0 0 1px #f6f6f6;"></div>
<svg style="position:absolute;left:954px;top:157.5px" width="16" height="15" viewBox="0 0 16 15"><defs><linearGradient id="gbb" x1="0" y1="0" x2="0" y2="1"><stop offset="0" stop-color="#ffd7ae"/><stop offset="0.4" stop-color="#ffd43a"/><stop offset="1" stop-color="#f7b416"/></linearGradient></defs>
<path d="M8 0.6 C12.4 0.6 15.4 2.9 15.4 5.7 C15.4 8.5 12.6 10.7 8.8 10.8 L7.8 10.8 C7 12.2 6 13.4 4.4 14 C5.2 12.8 5.5 11.6 5.4 10.5 C2.4 9.8 0.6 7.9 0.6 5.7 C0.6 2.9 3.6 0.6 8 0.6 Z" fill="url(#gbb)" stroke="#e08c1e" stroke-width="0.9"/>
<path d="M3.4 4.2v2.2M4.8 4.2v2.2M3 6.8h2.6" stroke="#c9a25a" stroke-width="0.7" fill="none"/>
<path d="M9.4 4.1v2.4M10.8 4.1v2.4M12.2 4.1v2.4" stroke="#ea6a10" stroke-width="0.8" fill="none"/></svg>
<div class="btn" style="left:951px;top:183px;width:22px;height:20px;border-color:#707070;box-shadow:inset 0 0 0 1px #f6f6f6;"></div>
<svg style="position:absolute;left:954px;top:185.5px" width="16" height="15" viewBox="0 0 16 15"><defs><linearGradient id="gbb" x1="0" y1="0" x2="0" y2="1"><stop offset="0" stop-color="#ffd7ae"/><stop offset="0.4" stop-color="#ffd43a"/><stop offset="1" stop-color="#f7b416"/></linearGradient></defs>
<path d="M8 0.6 C12.4 0.6 15.4 2.9 15.4 5.7 C15.4 8.5 12.6 10.7 8.8 10.8 L7.8 10.8 C7 12.2 6 13.4 4.4 14 C5.2 12.8 5.5 11.6 5.4 10.5 C2.4 9.8 0.6 7.9 0.6 5.7 C0.6 2.9 3.6 0.6 8 0.6 Z" fill="url(#gbb)" stroke="#e08c1e" stroke-width="0.9"/>
<path d="M3.4 4.2v2.2M4.8 4.2v2.2M3 6.8h2.6" stroke="#c9a25a" stroke-width="0.7" fill="none"/>
<path d="M9.4 4.1v2.4M10.8 4.1v2.4M12.2 4.1v2.4" stroke="#ea6a10" stroke-width="0.8" fill="none"/></svg>
<div class="grp" style="left:248px;top:210px;width:733px;height:128px;"><div class="gh"></div></div>
<div style="position:absolute;left:257.5px;top:212.86px;font-size:11px;line-height:15px;color:#000;white-space:nowrap;letter-spacing:-0.095px;transform-origin:0 11.14px;transform:scaleY(1.120);">Parâmetros</div>
<svg style="position:absolute;left:958px;top:211px" width="19" height="19" viewBox="0 0 19 19"><defs><radialGradient id="gcl" cx="0.45" cy="0.4" r="0.7"><stop offset="0" stop-color="#ffffff"/><stop offset="0.85" stop-color="#fdfdfe"/><stop offset="1" stop-color="#e4e7ee"/></radialGradient></defs>
<circle cx="9.5" cy="9.7" r="8.3" fill="#7d8aa3" opacity="0.7"/>
<circle cx="9" cy="9" r="8.1" fill="url(#gcl)" stroke="#a9b3c6" stroke-width="0.7"/>
<path d="M5.5 7.8 L8.7 4.7 L11.9 7.8 M5.5 12 L8.7 8.9 L11.9 12" fill="none" stroke="#14255e" stroke-width="1.15"/></svg>
<div style="position:absolute;left:256px;top:237.86px;font-size:11px;line-height:15px;color:#000;white-space:nowrap;letter-spacing:-0.104px;transform-origin:0 11.14px;transform:scaleY(1.120);">Agrupamento</div>
<div style="position:absolute;left:256px;top:264.36px;font-size:11px;line-height:15px;color:#000;white-space:nowrap;letter-spacing:0.075px;transform-origin:0 11.14px;transform:scaleY(1.120);">Valor padrão</div>
<div style="position:absolute;left:256px;top:290.86px;font-size:11px;line-height:15px;color:#000;white-space:nowrap;letter-spacing:0.093px;transform-origin:0 11.14px;transform:scaleY(1.120);">Valor Mínimo</div>
<div style="position:absolute;left:256px;top:318.86px;font-size:11px;line-height:15px;color:#000;white-space:nowrap;letter-spacing:0.143px;transform-origin:0 11.14px;transform:scaleY(1.120);">Valor Máximo</div>
<div class="inp" style="left:333px;top:235px;width:355px;height:21px;border-color:#646464;"></div>
<div style="position:absolute;left:336px;top:238px;width:43px;height:13px;background:#0078d7;"></div>
<div style="position:absolute;left:336.8px;top:237.66px;font-size:11px;line-height:15px;color:#fff;white-space:nowrap;letter-spacing:-0.303px;transform-origin:0 11.14px;transform:scaleY(1.120);">Entidade</div>
<svg style="position:absolute;left:675px;top:243px" width="10" height="6" viewBox="0 0 10 6"><path d="M0.7 0.8 L4.7 4.8 L8.7 0.8" fill="none" stroke="#444" stroke-width="1.1"/></svg>
<div class="btn" style="left:689px;top:236px;width:22px;height:20px;border-color:#707070;box-shadow:inset 0 0 0 1px #f6f6f6;"></div>
<svg style="position:absolute;left:692px;top:238.3px" width="16" height="15" viewBox="0 0 16 15"><defs><linearGradient id="gbb" x1="0" y1="0" x2="0" y2="1"><stop offset="0" stop-color="#ffd7ae"/><stop offset="0.4" stop-color="#ffd43a"/><stop offset="1" stop-color="#f7b416"/></linearGradient></defs>
<path d="M8 0.6 C12.4 0.6 15.4 2.9 15.4 5.7 C15.4 8.5 12.6 10.7 8.8 10.8 L7.8 10.8 C7 12.2 6 13.4 4.4 14 C5.2 12.8 5.5 11.6 5.4 10.5 C2.4 9.8 0.6 7.9 0.6 5.7 C0.6 2.9 3.6 0.6 8 0.6 Z" fill="url(#gbb)" stroke="#e08c1e" stroke-width="0.9"/>
<path d="M3.4 4.2v2.2M4.8 4.2v2.2M3 6.8h2.6" stroke="#c9a25a" stroke-width="0.7" fill="none"/>
<path d="M9.4 4.1v2.4M10.8 4.1v2.4M12.2 4.1v2.4" stroke="#ea6a10" stroke-width="0.8" fill="none"/></svg>
<div style="position:absolute;left:721.4px;top:237.86px;font-size:11px;line-height:15px;color:#000;white-space:nowrap;letter-spacing:0.171px;transform-origin:0 11.14px;transform:scaleY(1.120);">Tipo</div>
<div class="btn" style="left:751px;top:235px;width:154px;height:21px;"></div>
<div style="position:absolute;left:754.8px;top:237.86px;font-size:11px;line-height:15px;color:#000;white-space:nowrap;letter-spacing:-0.211px;transform-origin:0 11.14px;transform:scaleY(1.120);">Verdadeiro/Falso</div>
<svg style="position:absolute;left:890px;top:243px" width="10" height="6" viewBox="0 0 10 6"><path d="M0.7 0.8 L4.7 4.8 L8.7 0.8" fill="none" stroke="#444" stroke-width="1.1"/></svg>
<div class="cb" style="left:911px;top:239px;border-color:#bcbcbc;"></div>
<div style="position:absolute;left:928.5px;top:237.86px;font-size:11px;line-height:15px;color:#787878;white-space:nowrap;letter-spacing:-0.215px;transform-origin:0 11.14px;transform:scaleY(1.120);">Medida</div>
<div class="btn" style="left:333px;top:261px;width:380px;height:21px;"></div>
<div style="position:absolute;left:336.5px;top:264.46px;font-size:11px;line-height:15px;color:#000;white-space:nowrap;letter-spacing:-0.245px;transform-origin:0 11.14px;transform:scaleY(1.120);">Verdadeiro</div>
<svg style="position:absolute;left:699px;top:269px" width="10" height="6" viewBox="0 0 10 6"><path d="M0.7 0.8 L4.7 4.8 L8.7 0.8" fill="none" stroke="#444" stroke-width="1.1"/></svg>
<div class="cb" style="left:849px;top:265px;"></div>
<div style="position:absolute;left:866px;top:263.86px;font-size:11px;line-height:15px;color:#000;white-space:nowrap;letter-spacing:0.217px;transform-origin:0 11.14px;transform:scaleY(1.120);">Visível</div>
<div class="cb" style="left:911px;top:265px;"></div>
<div style="position:absolute;left:928.7px;top:263.86px;font-size:11px;line-height:15px;color:#000;white-space:nowrap;letter-spacing:-0.090px;transform-origin:0 11.14px;transform:scaleY(1.120);">Editável</div>
<div class="inp" style="left:333px;top:287px;width:331px;height:22px;"></div>
<div class="inp" style="left:333px;top:315px;width:331px;height:22px;"></div>
<div style="position:absolute;left:665px;top:288px;width:22px;height:20px;background:#cccccc;"></div>
<svg style="position:absolute;left:667.5px;top:290px" width="17" height="16" viewBox="0 0 17 16"><path d="M0.8 8.2 L2.6 7.4 L5 13.2 L7.6 1.6 L15.6 1.6" fill="none" stroke="#555" stroke-width="1.5"/>
<text x="11.6" y="13.6" font-family="Liberation Sans, sans-serif" font-style="italic" font-weight="bold" font-size="11.5" fill="#f0f0f0" stroke="#4a4a4a" stroke-width="0.9" paint-order="stroke" text-anchor="middle">a</text></svg>
<div style="position:absolute;left:689px;top:288px;width:22px;height:20px;background:#cccccc;"></div>
<div style="position:absolute;left:695.6px;top:289.82px;font-size:12.5px;line-height:16px;color:#6a6a6a;white-space:nowrap;font-family:'Liberation Serif',serif;transform-origin:0 0;transform:scaleX(1.14);">Σ</div>
<div style="position:absolute;left:665px;top:316px;width:22px;height:20px;background:#cccccc;"></div>
<svg style="position:absolute;left:667.5px;top:318px" width="17" height="16" viewBox="0 0 17 16"><path d="M0.8 8.2 L2.6 7.4 L5 13.2 L7.6 1.6 L15.6 1.6" fill="none" stroke="#555" stroke-width="1.5"/>
<text x="11.6" y="13.6" font-family="Liberation Sans, sans-serif" font-style="italic" font-weight="bold" font-size="11.5" fill="#f0f0f0" stroke="#4a4a4a" stroke-width="0.9" paint-order="stroke" text-anchor="middle">a</text></svg>
<div style="position:absolute;left:689px;top:316px;width:22px;height:20px;background:#cccccc;"></div>
<div style="position:absolute;left:695.6px;top:317.82px;font-size:12.5px;line-height:16px;color:#6a6a6a;white-space:nowrap;font-family:'Liberation Serif',serif;transform-origin:0 0;transform:scaleX(1.14);">Σ</div>
<div class="cb" style="left:810px;top:319px;"></div>
<div style="position:absolute;left:827px;top:317.86px;font-size:11px;line-height:15px;color:#000;white-space:nowrap;letter-spacing:0.070px;transform-origin:0 11.14px;transform:scaleY(1.120);">Manter valor ao desassociar</div>
<div style="position:absolute;left:249px;top:337px;width:731px;height:1px;background:#b4ceeb;"></div>
<div style="position:absolute;left:249px;top:338px;width:731px;height:1px;background:#fff;"></div>
<div class="grp" style="left:248px;top:339px;width:733px;height:82px;"><div class="gh"></div></div>
<div style="position:absolute;left:257.5px;top:341.86px;font-size:11px;line-height:15px;color:#000;white-space:nowrap;letter-spacing:0.139px;transform-origin:0 11.14px;transform:scaleY(1.120);">Assistente</div>
<div style="position:absolute;left:256.6px;top:367.86px;font-size:11px;line-height:15px;color:#000;white-space:nowrap;letter-spacing:-0.087px;transform-origin:0 11.14px;transform:scaleY(1.120);">Categoria</div>
<div style="position:absolute;left:256.6px;top:394.86px;font-size:11px;line-height:15px;color:#000;white-space:nowrap;letter-spacing:-0.155px;transform-origin:0 11.14px;transform:scaleY(1.120);">Ordem</div>
<div class="btn" style="left:313px;top:364px;width:589px;height:22px;border-color:#abadb3;background:#e3e3e3;"></div>
<div class="btn" style="left:903px;top:365px;width:22px;height:20px;"></div>
<svg style="position:absolute;left:906px;top:367px" width="16" height="16" viewBox="0 0 16 16"><g transform="rotate(-35 8 8)"><rect x="1" y="5" width="14" height="6.4" rx="2" fill="#f4f4f4" stroke="#c9c9c9" stroke-width="0.7"/>
<path d="M10.5 5 h2.5 a2 2 0 0 1 2 2 v2.4 a2 2 0 0 1 -2 2 h-2.5z" fill="#ef8ca0" stroke="#d96a84" stroke-width="0.6"/></g>
<ellipse cx="7" cy="14.3" rx="5" ry="0.9" fill="#cfcfcf" opacity="0.8"/></svg>
<div class="btn" style="left:927px;top:365px;width:22px;height:20px;"></div>
<svg style="position:absolute;left:930px;top:367.5px" width="16" height="15" viewBox="0 0 16 15"><defs><linearGradient id="gbn" x1="0" y1="0" x2="1" y2="0"><stop offset="0" stop-color="#7fa0dc"/><stop offset="0.45" stop-color="#f4f8ff"/><stop offset="1" stop-color="#5f83c8"/></linearGradient>
<linearGradient id="gbn2" x1="0" y1="0" x2="1" y2="0"><stop offset="0" stop-color="#3f5fb0"/><stop offset="0.5" stop-color="#9db8ea"/><stop offset="1" stop-color="#2c4a9c"/></linearGradient></defs>
<path d="M3 0.6 h2.6 v2 l1.6 2.2 v9 h-6.4 v-9 l2.2 -2.2z" fill="url(#gbn2)" stroke="#22398a" stroke-width="0.9" stroke-linejoin="round"/>
<path d="M10.4 0.6 h2.6 v2 l2.2 2.2 v9 h-6.4 v-9 l1.6 -2.2z" fill="url(#gbn2)" stroke="#22398a" stroke-width="0.9" stroke-linejoin="round"/>
<rect x="1.5" y="7.6" width="5" height="5.6" fill="url(#gbn)"/>
<rect x="9.5" y="7.6" width="5" height="5.6" fill="url(#gbn)"/>
<rect x="7" y="5" width="2" height="3.2" fill="#22398a"/>
<path d="M3.2 1.6h2.2M10.6 1.6h2.2" stroke="#dfe9fb" stroke-width="0.9"/>
<path d="M1 6.9h6M9 6.9h6" stroke="#22398a" stroke-width="0.8"/></svg>
<div class="btn" style="left:951px;top:365px;width:22px;height:20px;"></div>
<svg style="position:absolute;left:955px;top:368px" width="14" height="14" viewBox="0 0 14 14"><defs><linearGradient id="ggo" x1="0" y1="0" x2="0" y2="1"><stop offset="0" stop-color="#3fbf3a"/><stop offset="1" stop-color="#0d8a16"/></linearGradient></defs>
<rect x="0.5" y="0.5" width="13" height="13" rx="1.2" fill="url(#ggo)" stroke="#0b7a12"/>
<path d="M3 7h7.5M7.5 3.8 L10.8 7 L7.5 10.2" fill="none" stroke="#fff" stroke-width="1.5"/></svg>
<div class="inp" style="left:313px;top:392px;width:662px;height:20px;border-color:#696969;"></div>
<div class="grp" style="left:248px;top:426px;width:733px;height:145px;"><div class="gh"></div></div>
<div style="position:absolute;left:257.5px;top:428.86px;font-size:11px;line-height:15px;color:#000;white-space:nowrap;letter-spacing:-0.106px;transform-origin:0 11.14px;transform:scaleY(1.120);">Comportamento</div>
<div class="cb" style="left:254px;top:453px;"></div>
<div style="position:absolute;left:271.5px;top:451.86px;font-size:11px;line-height:15px;color:#000;white-space:nowrap;letter-spacing:0.017px;transform-origin:0 11.14px;transform:scaleY(1.120);">Lançar evento ao mudar valor</div>
<div class="cb" style="left:254px;top:477px;"></div>
<svg style="position:absolute;left:254px;top:477px" width="13" height="13" viewBox="0 0 13 13"><path d="M2.6 6.6 L5.2 9.3 L10.6 3.2" fill="none" stroke="#444" stroke-width="1.2"/></svg>
<div style="position:absolute;left:271.5px;top:475.86px;font-size:11px;line-height:15px;color:#000;white-space:nowrap;letter-spacing:0.014px;transform-origin:0 11.14px;transform:scaleY(1.120);">Criação automática</div>
<div class="cb" style="left:254px;top:501px;"></div>
<div style="position:absolute;left:271.5px;top:499.86px;font-size:11px;line-height:15px;color:#000;white-space:nowrap;letter-spacing:0.035px;transform-origin:0 11.14px;transform:scaleY(1.120);">Alterar forma</div>
<div class="cb" style="left:254px;top:525px;"></div>
<svg style="position:absolute;left:254px;top:525px" width="13" height="13" viewBox="0 0 13 13"><path d="M2.6 6.6 L5.2 9.3 L10.6 3.2" fill="none" stroke="#444" stroke-width="1.2"/></svg>
<div style="position:absolute;left:271.5px;top:523.86px;font-size:11px;line-height:15px;color:#000;white-space:nowrap;letter-spacing:0.082px;transform-origin:0 11.14px;transform:scaleY(1.120);">Atualização dinâmica</div>
<div class="cb" style="left:254px;top:549px;"></div>
<svg style="position:absolute;left:254px;top:549px" width="13" height="13" viewBox="0 0 13 13"><path d="M2.6 6.6 L5.2 9.3 L10.6 3.2" fill="none" stroke="#444" stroke-width="1.2"/></svg>
<div style="position:absolute;left:271.5px;top:547.86px;font-size:11px;line-height:15px;color:#000;white-space:nowrap;letter-spacing:0.016px;transform-origin:0 11.14px;transform:scaleY(1.120);">Propriedade avançada</div>
</body></html>
